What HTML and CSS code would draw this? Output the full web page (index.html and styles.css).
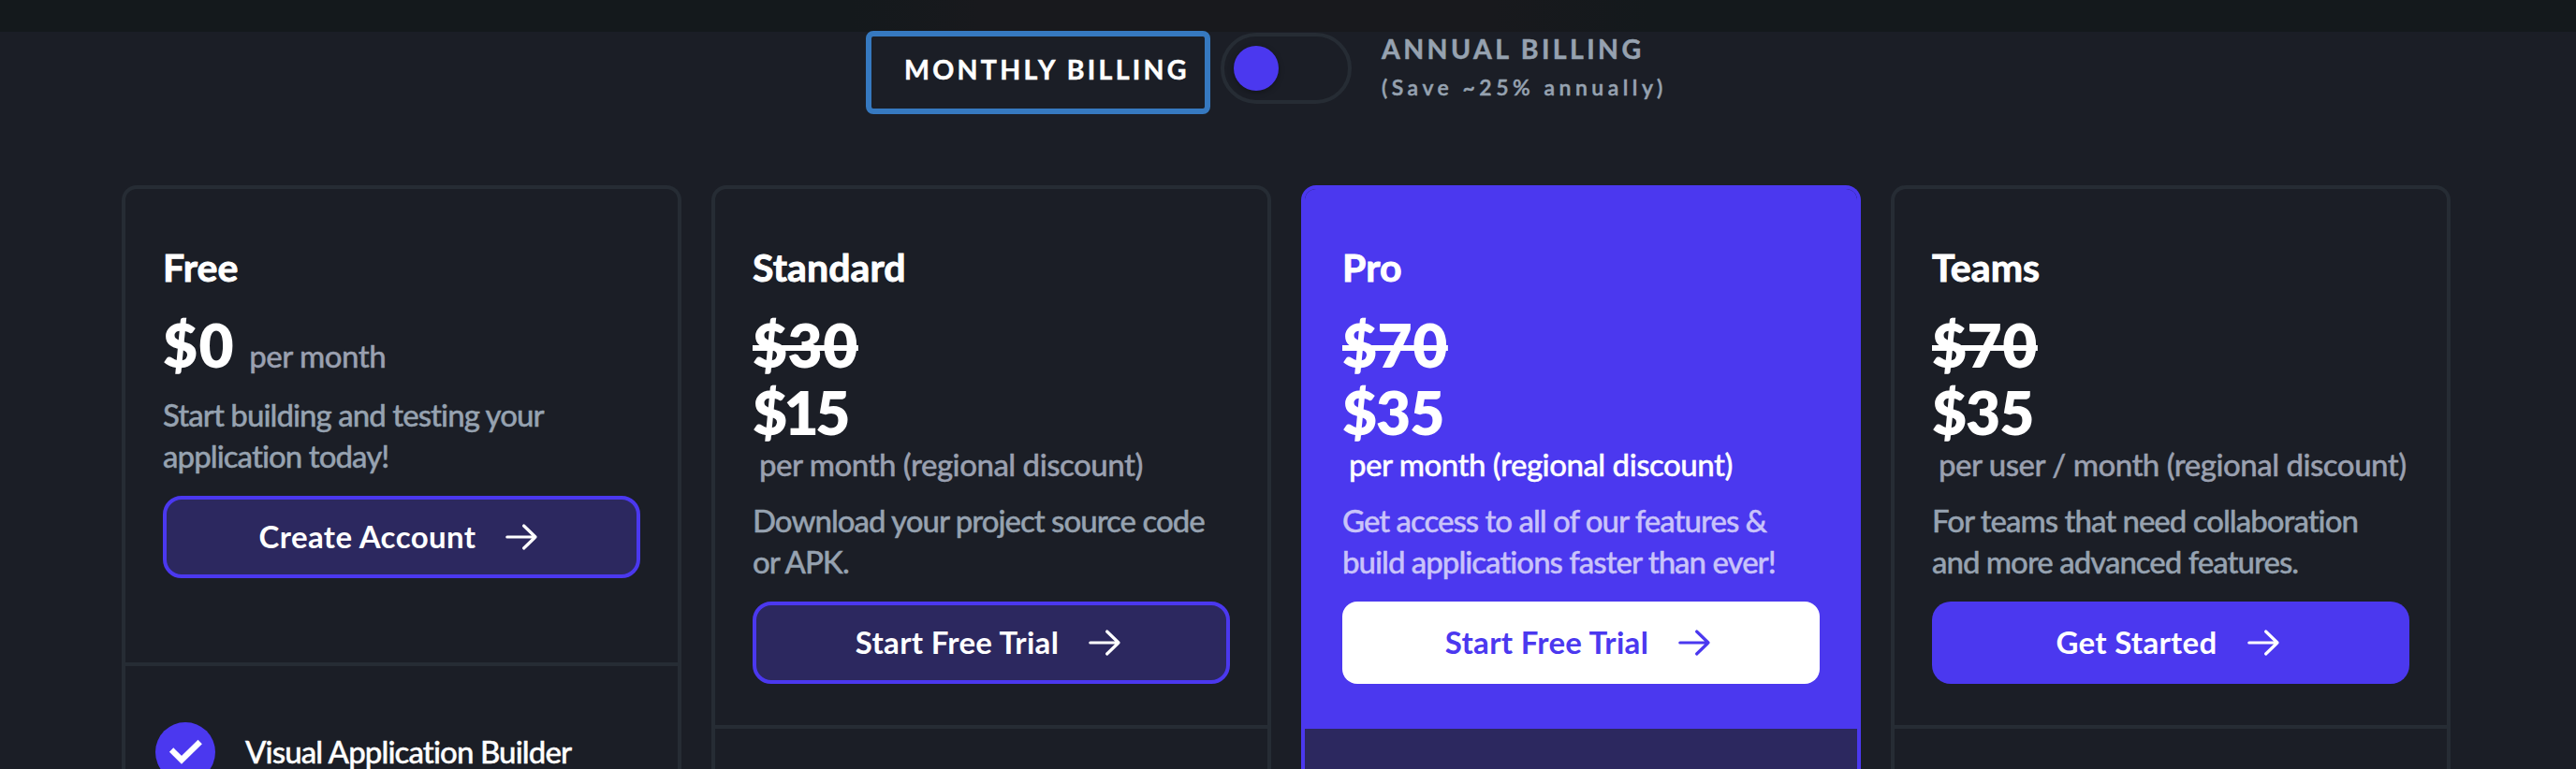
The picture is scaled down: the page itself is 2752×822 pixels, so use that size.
FILE: index.html
```html
<!DOCTYPE html>
<html lang="en">
<head>
<meta charset="utf-8">
<title>Pricing</title>
<link rel="stylesheet" href="styles.css">
</head>
<body>
<svg class="defs" aria-hidden="true">
  <symbol id="arrow" viewBox="0 0 38 30"><path d="M1.8 15H32M19.6 3L32 15L19.6 27" fill="none" stroke="currentColor" stroke-width="3.2" stroke-linecap="round" stroke-linejoin="round"/></symbol>
  <symbol id="check" viewBox="0 0 64 64"><path d="M19.3 31.7L28 40.3L45.5 23.2" fill="none" stroke="#fff" stroke-width="6.2" stroke-linecap="square"/></symbol>
</svg>
<header class="topbar"></header>
<main>
  <section class="billing">
    <button class="monthly">MONTHLY BILLING</button>
    <div class="toggle"><span class="knob"></span></div>
    <div class="annual">
      <div class="annual-title">ANNUAL BILLING</div>
      <div class="annual-note">(Save ~25% annually)</div>
    </div>
  </section>
  <section class="plans">
    <article class="card free">
      <div class="head">
        <h2>Free</h2>
        <div class="inline-price"><span class="price">$0</span><span class="period">per month</span></div>
        <p class="desc">Start building and testing your<br>application today!</p>
        <a class="btn outline create">Create Account<svg class="arrow"><use href="#arrow"/></svg></a>
      </div>
      <div class="features">
        <span class="badge"><svg width="64" height="64"><use href="#check"/></svg></span>
        <span class="feature">Visual Application Builder</span>
      </div>
    </article>
    <article class="card">
      <div class="head">
        <h2>Standard</h2>
        <div class="price"><s>$30</s></div>
        <div class="price fifteen">$15</div>
        <div class="period">per month (regional discount)</div>
        <p class="desc">Download your project source code<br>or APK.</p>
        <a class="btn outline">Start Free Trial<svg class="arrow"><use href="#arrow"/></svg></a>
      </div>
      <div class="features"></div>
    </article>
    <article class="card pro">
      <div class="head">
        <h2>Pro</h2>
        <div class="price"><s>$70</s></div>
        <div class="price now">$35</div>
        <div class="period">per month (regional discount)</div>
        <p class="desc">Get access to all of our features &amp;<br>build applications faster than ever!</p>
        <a class="btn white">Start Free Trial<svg class="arrow"><use href="#arrow"/></svg></a>
      </div>
      <div class="features"></div>
    </article>
    <article class="card">
      <div class="head">
        <h2>Teams</h2>
        <div class="price"><s>$70</s></div>
        <div class="price now">$35</div>
        <div class="period">per user / month (regional discount)</div>
        <p class="desc">For teams that need collaboration<br>and more advanced features.</p>
        <a class="btn solid">Get Started<svg class="arrow"><use href="#arrow"/></svg></a>
      </div>
      <div class="features"></div>
    </article>
  </section>
</main>
</body>
</html>
```

FILE: styles.css
```css
* { box-sizing: border-box; margin: 0; }
html, body { height: 822px; overflow: hidden; }
body {
  display: flex;
  flex-direction: column;
  background: #1b1e26;
  color: #fff;
  font-family: Lato, sans-serif;
}
.defs { display: none; }
.topbar { height: 34px; flex: none; background: linear-gradient(90deg, #14191c, #14191c 33%, #18191d 38%, #18191d 58%, #14191c 64%); }
main { display: flex; flex-direction: column; flex: 1; min-height: 0; margin-top: -1px; }

.billing { display: flex; align-items: flex-start; height: 89px; flex: none; padding-left: 925px; }
.monthly {
  width: 368px; height: 89px;
  padding: 0 0 8px 35px;
  border: 6px solid #3679c0;
  border-radius: 8px;
  background: #1b1e26;
  color: #fff;
  font: 700 28.5px/40px Lato, sans-serif;
  letter-spacing: 3.3px;
  text-align: left;
  white-space: nowrap;
  -webkit-text-stroke: .5px currentColor;
}
.toggle {
  width: 140px; height: 76px;
  margin: 2px 0 0 11px;
  padding: 10px;
  border: 4px solid #262c34;
  border-radius: 38px;
}
.knob { display: block; width: 48px; height: 48px; border-radius: 50%; background: #4b38ef; box-shadow: 0 2px 6px rgba(0,0,0,.3); }
.annual { margin-left: 32px; color: #96a2b0; white-space: nowrap; -webkit-text-stroke: .5px currentColor; }
.annual-title { font: 700 28.5px/38px Lato, sans-serif; letter-spacing: 3.4px; }
.annual-note { margin-top: 4px; font: 600 23px/36px Lato, sans-serif; letter-spacing: 4.5px; }

.plans { display: grid; grid-template-columns: repeat(4, 598px); column-gap: 32px; flex: 1; min-height: 0; margin: 76px 0 0 130px; }
.card {
  display: flex;
  flex-direction: column;
  border: 4px solid #262c34;
  border-bottom: 0;
  border-radius: 16px 16px 0 0;
  overflow: hidden;
}
.head { flex: none; padding: 60px 40px 44px; border-bottom: 4px solid #262c34; white-space: nowrap; }
.free .head { padding-bottom: 90px; }
h2 { margin-bottom: 23px; font-size: 41px; line-height: 48px; font-weight: 700; letter-spacing: .1px; -webkit-text-stroke: .9px currentColor; }
.price { font-size: 64px; line-height: 72px; font-weight: 800; letter-spacing: .5px; }
.fifteen { letter-spacing: -3.5px; }
.now { letter-spacing: -1px; }
.inline-price { display: flex; align-items: baseline; height: 72px; }
.inline-price .price { letter-spacing: 1.5px; }
.period { margin: -2px 0 0 7px; font-size: 33px; line-height: 42px; font-weight: 500; letter-spacing: -.5px; color: #9aa0b0; -webkit-text-stroke: .4px currentColor; }
.inline-price .period { margin: 0 0 0 15px; }
s { text-decoration-thickness: 6px; }
.desc { margin: 17px 0 21px; font-size: 33px; line-height: 44px; font-weight: 500; letter-spacing: -1px; color: #96a2b0; -webkit-text-stroke: .4px currentColor; }
.free .desc { margin: 16px 0 21px; letter-spacing: -.95px; }
.free .btn { margin-top: 21px; }
.btn {
  display: flex;
  align-items: center;
  justify-content: center;
  height: 88px;
  padding: 0 3px 2px 0;
  border-radius: 20px;
  font-size: 33px;
  font-weight: 700;
  letter-spacing: .3px;
}
.create { letter-spacing: .4px; }
.arrow { width: 38px; height: 30px; margin: 2px 0 0 32px; }
.outline { background: #2c285f; border: 4px solid #4b38ef; }
.white { background: #fff; color: #4b38ef; border-radius: 16px; }
.solid { background: #4b38ef; }
.features { display: flex; flex: 1; gap: 32px; padding: 60px 32px 0; min-height: 0; }
.badge { flex: none; width: 64px; height: 64px; border-radius: 50%; background: #4b38ef; }
.feature { font-size: 33px; line-height: 62px; font-weight: 500; letter-spacing: -.9px; white-space: nowrap; -webkit-text-stroke: .4px currentColor; }
.pro { border-color: #4b38ef; }
.pro .head { background: #4b38ef; border-color: #4b38ef; }
.pro .period { color: #fff; }
.pro .desc { color: #c9c3fa; }
.pro .features { background: #2c285f; }
```
